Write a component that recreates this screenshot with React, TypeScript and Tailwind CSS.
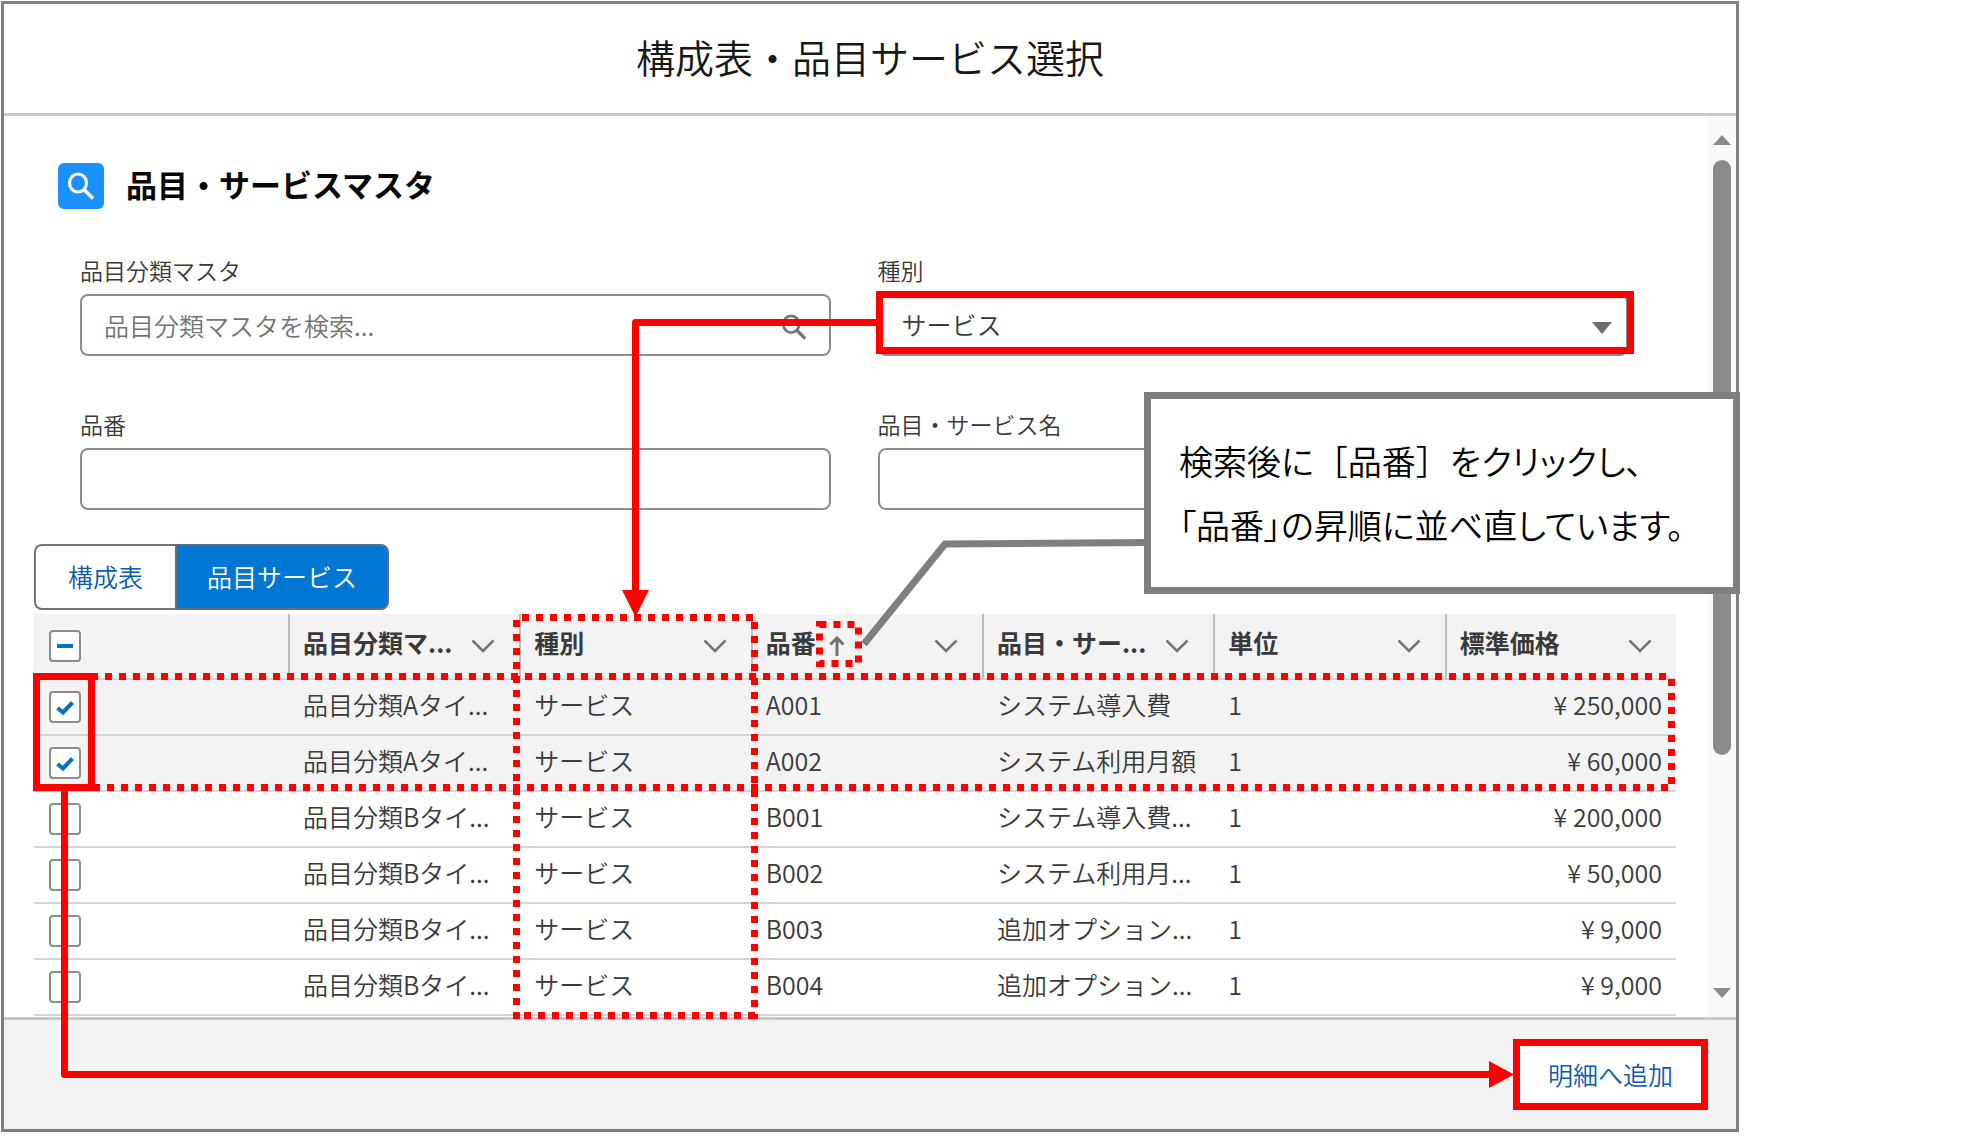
import { useId } from 'react';

const columns = [
  { label: '品目分類マ...', sorted: false },
  { label: '種別', sorted: false },
  { label: '品番', sorted: true },
  { label: '品目・サー...', sorted: false },
  { label: '単位', sorted: false },
  { label: '標準価格', sorted: false }
];

const rows = [
  { category: '品目分類Aタイ...', code: 'A001', name: 'システム導入費', price: '250,000', checked: true },
  { category: '品目分類Aタイ...', code: 'A002', name: 'システム利用月額', price: '60,000', checked: true },
  { category: '品目分類Bタイ...', code: 'B001', name: 'システム導入費...', price: '200,000', checked: false },
  { category: '品目分類Bタイ...', code: 'B002', name: 'システム利用月...', price: '50,000', checked: false },
  { category: '品目分類Bタイ...', code: 'B003', name: '追加オプション...', price: '9,000', checked: false },
  { category: '品目分類Bタイ...', code: 'B004', name: '追加オプション...', price: '9,000', checked: false }
];

const SearchIcon = ({ className }: { className: string }) => (
  <svg viewBox="0 0 28 28" fill="none" stroke="currentColor" className={className}>
    <ellipse cx="11" cy="11" rx="8.5" ry="9" strokeWidth="3" />
    <path d="M17 17.5 L26 26.5" strokeWidth="3.6" />
  </svg>
);

const ChevronIcon = () => (
  <svg viewBox="0 0 24 14" fill="none" stroke="currentColor" className="h-3.5 w-6">
    <path d="M1.5 1.5 L12 12 L22.5 1.5" strokeWidth="2.5" />
  </svg>
);

const SortArrowIcon = () => (
  <svg viewBox="0 0 18 20" fill="none" stroke="currentColor" className="h-5 w-[18px]">
    <path d="M9 20 V2 M2.5 8.5 L9 2 L15.5 8.5" strokeWidth="3" />
  </svg>
);

const Checkbox = ({ label, checked, partial }: { label: string; checked?: boolean; partial?: boolean }) => (
  <span className="relative block h-8 w-8">
    <input
      type="checkbox"
      aria-label={label}
      defaultChecked={checked}
      className="block h-8 w-8 appearance-none rounded border-2 border-[#8c8c8c] bg-white"
    />
    <svg viewBox="0 0 32 32" fill="none" stroke="#0b6fc2" className="pointer-events-none absolute inset-0">
      {partial && <path d="M8 16 H24" strokeWidth="4" />}
      {checked && <path d="M8.5 17 L14 21.5 L23.5 11.5" strokeWidth="4" />}
    </svg>
  </span>
);

const TextField = ({ label, placeholder, search }: { label: string; placeholder?: string; search?: boolean }) => {
  const id = useId();
  return (
    <div className="flex flex-col gap-3.5">
      <label htmlFor={id} className="text-[23px] leading-5">
        {label}
      </label>
      <div className="relative">
        <input
          id={id}
          type="text"
          placeholder={placeholder}
          className="block h-[62px] w-full rounded-lg border-2 border-[#8c8c8c] bg-white px-[22px] text-[25px] placeholder:text-[#747474]"
        />
        {search && <SearchIcon className="absolute top-5 right-6 h-[26px] w-[26px] text-[#747474]" />}
      </div>
    </div>
  );
};

const TypeField = () => {
  const id = useId();
  return (
    <div className="flex flex-col gap-3.5">
      <label htmlFor={id} className="text-[23px] leading-5">
        種別
      </label>
      <div className="relative">
        <select
          id={id}
          className="block h-[62px] w-full appearance-none rounded-lg border-2 border-[#8c8c8c] bg-white px-[22px] text-[25px]"
        >
          <option>サービス</option>
        </select>
        <svg viewBox="0 0 20 12" className="pointer-events-none absolute top-7 right-4 h-3 w-5">
          <path d="M0 0 H20 L10 12 Z" fill="#706e6b" />
        </svg>
      </div>
    </div>
  );
};

const ItemTable = () => (
  <table className="mt-1 w-full table-fixed border-separate border-spacing-0 text-left text-[25px] leading-8 whitespace-nowrap">
    <colgroup>
      <col className="w-[254px]" />
      <col span={6} />
    </colgroup>
    <thead className="bg-[#f3f3f3]">
      <tr>
        <th className="h-[66px] border-b-2 border-[#d4d4d4] pl-[15px]">
          <Checkbox label="すべて選択" partial />
        </th>
        {columns.map((column) => (
          <th key={column.label} className="border-b-2 border-l-2 border-b-[#d4d4d4] border-l-[#bdbdbd] pr-6 pl-[13px]">
            <div className="flex items-center">
              <span className="pb-2 font-bold">{column.label}</span>
              {column.sorted && (
                <span className="ml-3 text-[#747474]">
                  <SortArrowIcon />
                </span>
              )}
              <button type="button" aria-label={column.label} className="ml-auto text-[#747474]">
                <ChevronIcon />
              </button>
            </div>
          </th>
        ))}
      </tr>
    </thead>
    <tbody>
      {rows.map((row) => (
        <tr
          key={row.code}
          className="has-checked:bg-[#f3f3f3] [&>td]:h-14 [&>td]:border-b-2 [&>td]:border-[#d4d4d4] [&>td]:pl-[15px]"
        >
          <td>
            <Checkbox label={row.code} checked={row.checked} />
          </td>
          <td className="pb-1.5">{row.category}</td>
          <td className="pb-1.5">サービス</td>
          <td className="pb-1.5">{row.code}</td>
          <td className="pb-1.5">{row.name}</td>
          <td className="pb-1.5">1</td>
          <td className="pr-3.5 pb-1.5 text-right">¥ {row.price}</td>
        </tr>
      ))}
    </tbody>
  </table>
);

const Scrollbar = () => (
  <div className="flex w-7 shrink-0 flex-col items-center bg-[#fafafa] pt-[19px] pb-[19px]">
    <svg viewBox="0 0 18 10" className="mb-[15px] h-2.5 w-[18px]">
      <path d="M0 10 H18 L9 0 Z" fill="#8b8b8b" />
    </svg>
    <div className="w-[18px] grow-[595] rounded-full bg-[#8b8b8b]" />
    <div className="grow-[233]" />
    <svg viewBox="0 0 18 10" className="h-2.5 w-[18px]">
      <path d="M0 0 H18 L9 10 Z" fill="#8b8b8b" />
    </svg>
  </div>
);

// Frames and arrows drawn over the dialog
const Annotations = () => (
  <>
    <svg
      viewBox="0 0 1740 1134"
      fill="none"
      stroke="#ff0000"
      strokeWidth="7"
      className="pointer-events-none absolute -top-1 -left-1 h-[1134px] w-[1740px]"
    >
      <path d="M1146 542.5 L945 544 L864 644" stroke="#7f7f7f" />

      <rect x="879.5" y="294.5" width="751" height="56" />
      <path d="M876 322.5 H635.5 V594" strokeLinejoin="round" />
      <path d="M622 590 H649 L635.5 617 Z" fill="#ff0000" stroke="none" />

      <path d="M522 617.5 H756 M516.5 620 V1019 M754.5 622 V1019 M524 1015.5 H758" strokeDasharray="7 7" />
      <path d="M91 676.5 H1668 M93 787.5 H1668 M1671.5 679 V784" strokeDasharray="7 7" />
      <rect x="819.5" y="624.5" width="39" height="39" strokeDasharray="7 7" />

      <rect x="36.5" y="676.5" width="55" height="111" />
      <path d="M64.5 790 V1074.5 H1492" strokeLinejoin="round" />
      <path d="M1489 1061 V1088 L1514 1074.5 Z" fill="#ff0000" stroke="none" />
    </svg>

    <p className="absolute top-[388px] left-[1140px] w-[596px] border-[7px] border-[#7f7f7f] bg-white px-7 py-[30px] text-[34px] leading-[64px] whitespace-nowrap text-black [font-feature-settings:'palt']">
      検索後に<span className="[font-feature-settings:normal]">［品番］</span>をクリックし、
      <br />
      「品番」の昇順に並べ直しています。
    </p>
  </>
);

const App = () => {
  return (
    <div className="bg-white pt-px pr-[241px] pb-1.5 pl-px font-['Noto_Sans_CJK_JP',sans-serif] font-[350] text-[#3a3a3a]">
      <main className="relative border-[3px] border-[#7f7f7f]">
        <header className="border-b-3 border-[#c9c9c9] pt-[30px] pb-[34px]">
          <h1 className="text-center text-[39px] leading-[45px] text-[#181818]">構成表・品目サービス選択</h1>
        </header>

        <div className="flex">
          <div className="min-w-0 grow pt-[47px] pr-8 pb-px pl-[30px]">
            <div className="ml-6 flex items-center gap-[22px]">
              <span className="flex h-[46px] w-[46px] items-center justify-center rounded-md bg-[#1b90ff] text-white">
                <SearchIcon className="h-7 w-7" />
              </span>
              <h2 className="pb-1 text-[31px] leading-[42px] font-bold text-[#080707]">品目・サービスマスタ</h2>
            </div>

            <form className="mt-[51px] mr-12 ml-[46px] grid grid-cols-2 gap-x-[47px] gap-y-[58px]">
              <TextField label="品目分類マスタ" placeholder="品目分類マスタを検索..." search />
              <TypeField />
              <TextField label="品番" />
              <TextField label="品目・サービス名" />
            </form>

            <div className="mt-[34px] flex">
              <button
                type="button"
                className="h-[66px] rounded-l-lg border-2 border-r-0 border-[#747474] px-8 text-[25px] text-[#0b5cab]"
              >
                構成表
              </button>
              <button
                type="button"
                className="h-[66px] rounded-r-lg border-2 border-[#5c6f80] bg-[#0176d3] px-[30px] text-[25px] text-white"
              >
                品目サービス
              </button>
            </div>

            <ItemTable />
          </div>
          <Scrollbar />
        </div>

        <footer className="flex justify-end border-t-3 border-[#c9c9c9] bg-[#f3f3f3] py-[19px] pr-7">
          <button
            type="button"
            className="border-[7px] border-[#ff0000] bg-white px-7 text-[25px] leading-[57px] text-[#0b5cab]"
          >
            明細へ追加
          </button>
        </footer>

        <Annotations />
      </main>
    </div>
  );
};

export default App;
